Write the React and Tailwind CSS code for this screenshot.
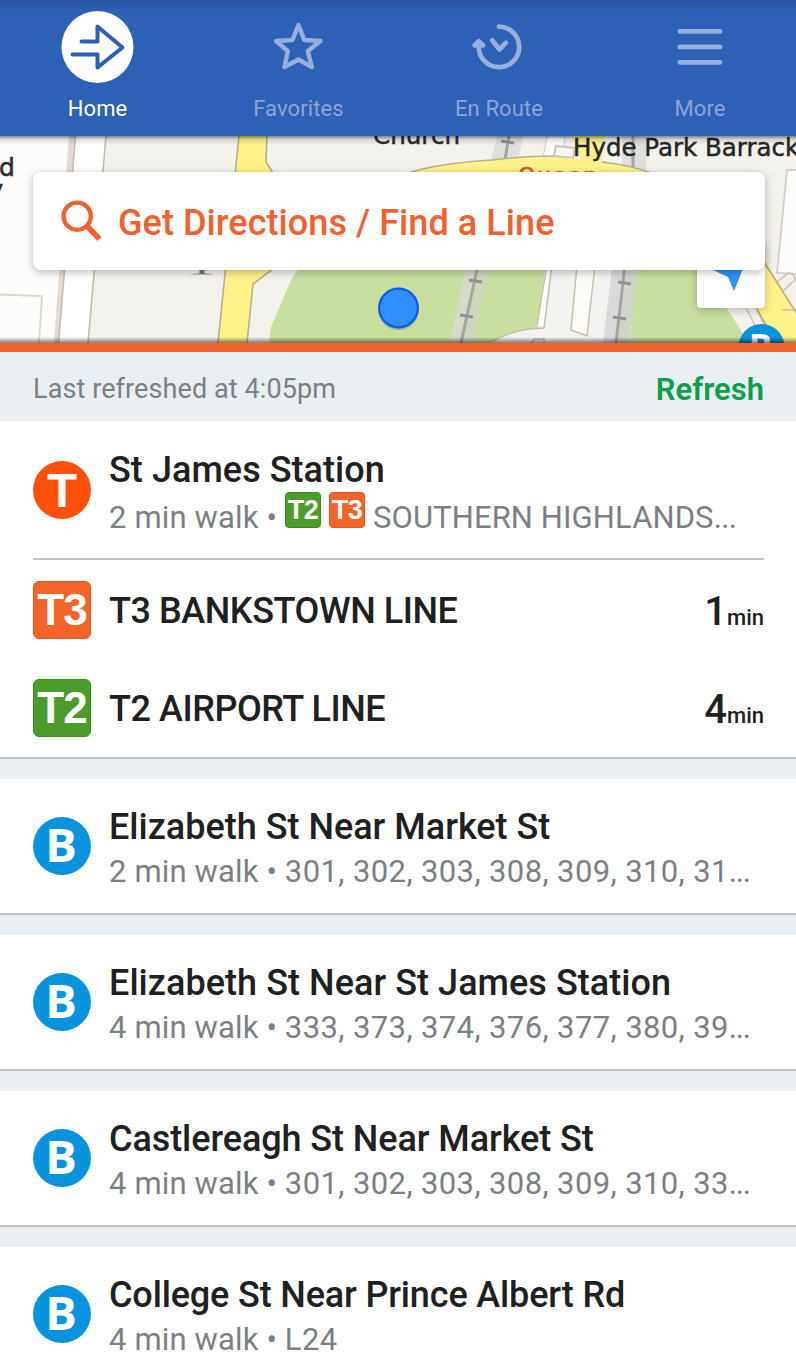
import React from 'react';

const tabs = [
  { label: 'Home', icon: 'home', active: true, width: 'w-[195px]' },
  { label: 'Favorites', icon: 'star', width: 'w-[207px]' },
  { label: 'En Route', icon: 'clock', width: 'w-[194px]' },
  { label: 'More', icon: 'menu', width: 'w-[208px]' },
];

const stops = [
  { name: 'Elizabeth St Near Market St', walk: '2 min walk', lines: '301, 302, 303, 308, 309, 310, 31', more: true, tracking: 'tracking-[0px]' },
  { name: 'Elizabeth St Near St James Station', walk: '4 min walk', lines: '333, 373, 374, 376, 377, 380, 39', more: true, tracking: 'tracking-[0.05px]' },
  { name: 'Castlereagh St Near Market St', walk: '4 min walk', lines: '301, 302, 303, 308, 309, 310, 33', more: true, tracking: 'tracking-[-0.08px]' },
  { name: 'College St Near Prince Albert Rd', walk: '4 min walk', lines: 'L24', tracking: 'tracking-[-0.15px]' },
];

const departures = [
  { code: 'T3', name: 'T3 BANKSTOWN LINE', mins: 1, color: 'bg-[#f1652a] border-[#ee5410]' },
  { code: 'T2', name: 'T2 AIRPORT LINE', mins: 4, color: 'bg-[#4d9b2c] border-[#30940b]' },
];

const TabIcon = ({ name }) => {
  if (name === 'home') {
    return (
      <svg width="72" height="72" viewBox="0 0 72 72" fill="none" className="overflow-visible">
        <circle cx="35.500" cy="36" r="36" fill="#fff" />
        <path
          d="M19.500 30.500H35.500V15.500L60.500 36.500L35.500 56.500V43.500H10.500"
          stroke="#2c61b5"
          strokeWidth="4"
          strokeLinecap="round"
          strokeLinejoin="round"
        />
      </svg>
    );
  }
  if (name === 'star') {
    return (
      <svg width="72" height="72" viewBox="0 0 72 72" fill="none" stroke="#98aedd" strokeWidth="4.2" strokeLinejoin="round">
        <path d="M35.500 24.500L35.500 24.500M35.500 24L35.500 24M35.500 25L41.300 29" stroke="none" />
        <path d="M35.500 14L41.300 29L57.500 30L44.800 40L48.800 56L35.500 48.500L21.500 56L24.800 40L13 30L29.500 29Z" strokeWidth="4.4" />
      </svg>
    );
  }
  if (name === 'clock') {
    return (
      <svg width="72" height="72" viewBox="0 0 72 72" fill="none" stroke="#98aedd" strokeWidth="4.8" strokeLinecap="round" strokeLinejoin="round">
        <path d="M36 15.700A20.200 20.200 0 1 1 15.800 35.700" />
        <path d="M11.700 34.300L15.800 30.300L20 34.300Z" fill="#98aedd" />
        <path d="M29.300 29.400L36.500 38.400L42.800 31.800" />
      </svg>
    );
  }
  return (
    <svg width="72" height="72" viewBox="0 0 72 72" stroke="#98aedd" strokeWidth="4.8" strokeLinecap="round">
      <path d="M15.800 20.400H56M15.800 35.900H56M15.800 51.400H56" />
    </svg>
  );
};

const Rail = ({ from, to, ticks }) => (
  <g>
    <path d={`M${from}L${to}`} stroke="#a2a5a2" strokeWidth="3" />
    {ticks.map(([x, y]) => (
      <path key={`${x}-${y}`} d={`M${x - 6} ${y - 1}L${x + 7} ${y + 1}`} stroke="#909390" strokeWidth="3" />
    ))}
  </g>
);

const CityMap = () => (
  <svg className="block h-full w-full" viewBox="0 136 796 207" preserveAspectRatio="none">
    <defs>
      <linearGradient id="mapTop" x1="0" x2="0" y1="0" y2="1">
        <stop offset="0" stopColor="#000" stopOpacity="0.45" />
        <stop offset="0.4" stopColor="#000" stopOpacity="0.12" />
        <stop offset="1" stopColor="#000" stopOpacity="0" />
      </linearGradient>
      <linearGradient id="mapBottom" x1="0" x2="0" y1="0" y2="1">
        <stop offset="0" stopColor="#000" stopOpacity="0" />
        <stop offset="1" stopColor="#000" stopOpacity="0.5" />
      </linearGradient>
    </defs>
    <rect y="136" width="796" height="207" fill="#f3f2ed" />
    {/* left block and the white street */}
    <path d="M0 136H69L54 343H0Z" fill="#fcfcfa" />
    <path d="M69 136L54 343H59L75 136Z" fill="#e1dad5" />
    <path d="M75 136L58 343H88L106 136Z" fill="#fff" />
    <path d="M75.500 136L58.500 343M106 136L88 343" stroke="#c6bcae" strokeWidth="1.600" />
    <path d="M0 294.500L42 296L39 343" fill="none" stroke="#ddd5ce" strokeWidth="1.800" />
    <text x="-1" y="175.500" fontSize="25" fill="#2b2b2b" stroke="#2b2b2b" strokeWidth="0.500" fontFamily="DejaVu Sans">d</text>
    <text x="-11" y="198" fontSize="24" fill="#2b2b2b" stroke="#2b2b2b" strokeWidth="0.500" fontFamily="DejaVu Sans">y</text>

    {/* yellow street on the left */}
    <path d="M239 136H267V163L275 176V267L253 284L247 343H218Z" fill="#fef28a" />
    <path d="M239 136L218 343M267 136L266 162L275 176M274 268L253 284L247 343" fill="none" stroke="#b9ae90" strokeWidth="1.600" />
    <path d="M190 275C195 272 209 272 214 275Z" fill="#bdbdb8" />
    <path d="M202 260V274" stroke="#777" strokeWidth="5" />

    {/* park */}
    <path d="M301 265L292 278L271 327L269 343H750L697 265Z" fill="#c8dfa0" />

    {/* tracks above the search box */}
    <path d="M497 136H523L516 172H488Z" fill="#dededc" />
    <path d="M622 136H646V172H622Z" fill="#dededc" />
    <Rail from="509 136" to="503 172" ticks={[[507, 142]]} />
    <Rail from="633 136" to="633 172" ticks={[]} />
    <path d="M547 136L543 158H562L565 136Z" fill="#fff" stroke="#d2cabf" />
    <path d="M556 146L575 148L573 158L554 156Z" fill="#f7f7f2" stroke="#cfc6b9" strokeWidth="2" />
    <path d="M572 136H604L602 162L580 158Z" fill="#fef28a" />
    <path d="M406 174Q432 164 492 160Q545 154 600 161Q632 165 660 176V180H406Z" fill="#fef28a" />
    <path d="M406 174Q432 164 492 160Q530 156 553 156M602 162Q632 165 660 176" fill="none" stroke="#b9ae90" strokeWidth="1.500" />

    {/* tracks and paths through the park */}
    <path d="M468 260H491L474 343H449Z" fill="#ced7bd" />
    <path d="M468 260H482L460 343H449Z" fill="#d5dacb" />
    <Rail from="478 265" to="461 343" ticks={[[475, 281], [466, 316]]} />
    <path d="M547 260H638L630 343H490C508 332 522 329 538 328Z" fill="#f3f3f1" />
    <path d="M546 265L537 326L544 327L551 265Z" fill="#fff" />
    <path d="M547 265L537 325M552 265L544 328C520 329 508 333 491 342" fill="none" stroke="#c9bda9" strokeWidth="1.500" />
    <path d="M577 265L571 330L587 336L595 265Z" fill="#fbfbf8" stroke="#cdbfa7" strokeWidth="1.500" />
    <path d="M532 343L534 339H544V343" fill="none" stroke="#c9bda9" strokeWidth="1.500" />
    <path d="M613 260H638L630 343H603Z" fill="#d9d9d9" />
    <path d="M628 260H640L629 343H618Z" fill="#cfd6c2" />
    <Rail from="625 265" to="616 343" ticks={[[624, 283], [619, 318]]} />

    {/* corner on the right */}
    <path d="M728 308L748 343H796V265H764Z" fill="#f3f2ed" />
    <path d="M742 300L760 335M752 300L766 328" stroke="#cbc2b5" strokeWidth="1.500" />
    <path d="M752 300L776 343H796V312L764 258L752 270Z" fill="#fef28a" />
    <path d="M757 309L776 343M764 262L797 314" stroke="#b9a97f" strokeWidth="1.500" />
    <path d="M787 170H800V274L777 273Z" fill="#fcfcfa" stroke="#d8cdc4" strokeWidth="1.800" />
    <path d="M776 283L788 273Q795 273 795 280L782 292M782 310H797" fill="none" stroke="#c9bfae" strokeWidth="1.500" />

    <text x="373" y="143.500" fontSize="25" fill="#2b2b2b" stroke="#2b2b2b" strokeWidth="0.500" fontFamily="DejaVu Sans" textLength="87" lengthAdjust="spacingAndGlyphs">Church</text>
    <text x="573" y="156" fontSize="25" fill="#252525" stroke="#252525" strokeWidth="0.500" fontFamily="DejaVu Sans" textLength="239" lengthAdjust="spacingAndGlyphs">Hyde Park Barracks</text>
    <text x="518" y="183" fontSize="22" fill="#c2603a" stroke="#c2603a" strokeWidth="0.500" fontFamily="DejaVu Sans" textLength="79">Queen</text>

    <rect y="136" width="796" height="9" fill="url(#mapTop)" />

    {/* current position */}
    <circle cx="398.500" cy="309.500" r="20.500" fill="#5a6b4a" opacity="0.350" />
    <circle cx="398.500" cy="308" r="19.300" fill="#2f90fd" stroke="#0a5af5" strokeWidth="2.200" />
    <circle cx="761.500" cy="347" r="23" fill="#0793dd" />
    <text x="760.500" y="360" textAnchor="middle" fontSize="35" fontWeight="700" fill="#fff" fontFamily="Open Sans">B</text>
    <rect y="337" width="796" height="6" fill="url(#mapBottom)" />
  </svg>
);

const StopBadge = ({ type }) => (
  <div
    className={
      type === 'T'
        ? "flex size-[58px] shrink-0 items-center justify-center rounded-full bg-[#ff500b] font-['Liberation_Sans'] text-[49px] leading-none font-bold text-white"
        : "flex size-[58px] shrink-0 items-center justify-center rounded-full bg-[#0793dd] pr-[2px] pb-[4px] font-['Open_Sans'] text-[47px] leading-none font-bold text-white"
    }
  >
    {type}
  </div>
);

const StopCard = ({ stop }) => (
  <section className="mb-5 flex h-[136px] border-b-2 border-[#c0c4c6] bg-white px-[33px]">
    <div className="mt-[38px]">
      <StopBadge type="B" />
    </div>
    <div className="ml-[18px] whitespace-nowrap">
      <h2 className={`mt-[27px] text-[36px] leading-[42px] font-medium text-[#1e2022] ${stop.tracking}`}>{stop.name}</h2>
      <p className="mt-[4px] text-[31px] leading-[40px] tracking-[0.15px] text-[#7c7f83]">
        {stop.walk} • <span className="tracking-[0.4px]">{stop.lines}</span>
        {stop.more && <span className="tracking-[-1.2px]">...</span>}
      </p>
    </div>
  </section>
);

const App = () => {
  return (
    <div className="h-[1370px] w-[796px] overflow-hidden bg-[#e9eff2] font-['Roboto',sans-serif]">
      <nav className="flex h-[136px] bg-[#2c61b5] bg-linear-to-b from-[#2853a0] to-[#2c61b5] to-8%">
        {tabs.map((tab) => (
          <div
            key={tab.label}
            className={`flex shrink-0 flex-col items-center pt-[11px] ${tab.width} ${tab.active ? 'text-white' : 'text-[#8ca5d8]'}`}
          >
            <TabIcon name={tab.icon} />
            <span className="mt-[12px] text-[22px] leading-[28px] tracking-[0.1px]">{tab.label}</span>
          </div>
        ))}
      </nav>

      <div className="relative h-[207px] overflow-hidden">
        <CityMap />
        <div className="absolute top-[105px] left-[697px] flex h-[67px] w-[68px] items-end justify-center rounded-[4px] bg-white shadow-[0_2px_8px_rgba(0,0,0,0.25)]">
          <svg className="mb-[17px]" width="42" height="42" viewBox="0 0 42 42">
            <path d="M41 0L24 42L18 28L3 21Z" fill="#2c93fb" />
          </svg>
        </div>
        <div className="absolute top-[36px] left-[33px] flex h-[98px] w-[732px] items-center rounded-[8px] bg-white pl-[28px] text-[#f1602f] shadow-[0_2px_9px_rgba(0,0,0,0.28)]">
          <svg width="42" height="42" viewBox="0 0 42 42" fill="none" stroke="#f1602f" strokeWidth="4.4">
            <circle cx="16.200" cy="16.200" r="13.600" />
            <path d="M25.500 25.500L38.500 39" strokeWidth="5.500" />
          </svg>
          <span className="mt-[3px] ml-[15px] text-[36px] leading-none font-medium tracking-[0.07px] whitespace-nowrap">Get Directions / Find a Line</span>
        </div>
      </div>
      <div className="h-[9px] bg-[#f1622f]" />

      <div className="flex h-[69px] items-center justify-between pt-[5px] pr-[32px] pl-[33px]">
        <span className="text-[27px] leading-none tracking-[0.1px] text-[#7c8084]">Last refreshed at 4:05pm</span>
        <span className="text-[31px] leading-none font-semibold text-[#0b9f49]">Refresh</span>
      </div>

      <section className="mb-5 h-[338px] border-b-2 border-[#c0c4c6] bg-white pr-[32px] pl-[33px]">
        <div className="flex h-[139px] border-b-2 border-[#bfc4c5]">
          <div className="mt-[40px]">
            <StopBadge type="T" />
          </div>
          <div className="ml-[18px] whitespace-nowrap">
            <h2 className="mt-[28px] text-[36px] leading-[42px] font-medium tracking-[0.05px] text-[#1e2022]">St James Station</h2>
            <div className="mt-[1px] flex text-[31px] leading-[51px] tracking-[0.15px] text-[#7c7f83]">
              <span className="w-[168px]">2 min walk •</span>
              <span className="ml-[8px] flex h-[36px] w-[36px] items-center justify-center rounded-[4px] border border-[#30940b] bg-[#4d9b2c] font-['Liberation_Sans'] text-[27px] leading-none font-bold tracking-[-0.5px] text-white">T2</span>
              <span className="ml-[8px] flex h-[36px] w-[36px] items-center justify-center rounded-[4px] border border-[#ee5410] bg-[#f1652a] font-['Liberation_Sans'] text-[27px] leading-none font-bold tracking-[-0.5px] text-white">T3</span>
              <span className="ml-[8px] tracking-[0.1px]">
                SOUTHERN HIGHLANDS<span className="tracking-[-0.6px]">...</span>
              </span>
            </div>
          </div>
        </div>
        {departures.map((d) => (
          <div key={d.code} className="flex h-[98px] items-center">
            <div className={`mt-[1px] flex size-[58px] items-center justify-center rounded-[6px] border pt-[1px] font-['Liberation_Sans'] text-[44px] leading-none font-bold tracking-[-1px] text-white ${d.color}`}>
              {d.code}
            </div>
            <span className="mt-[3px] ml-[18px] text-[36px] leading-none font-medium tracking-[-0.44px] text-[#1e2022]">{d.name}</span>
            <div className="mt-[5px] ml-auto flex items-baseline font-medium text-[#1e2022]">
              <span className="text-[40px] leading-none">{d.mins}</span>
              <span className="text-[22px] leading-none">min</span>
            </div>
          </div>
        ))}
      </section>

      {stops.map((stop) => (
        <StopCard key={stop.name} stop={stop} />
      ))}
    </div>
  );
};

export default App;
